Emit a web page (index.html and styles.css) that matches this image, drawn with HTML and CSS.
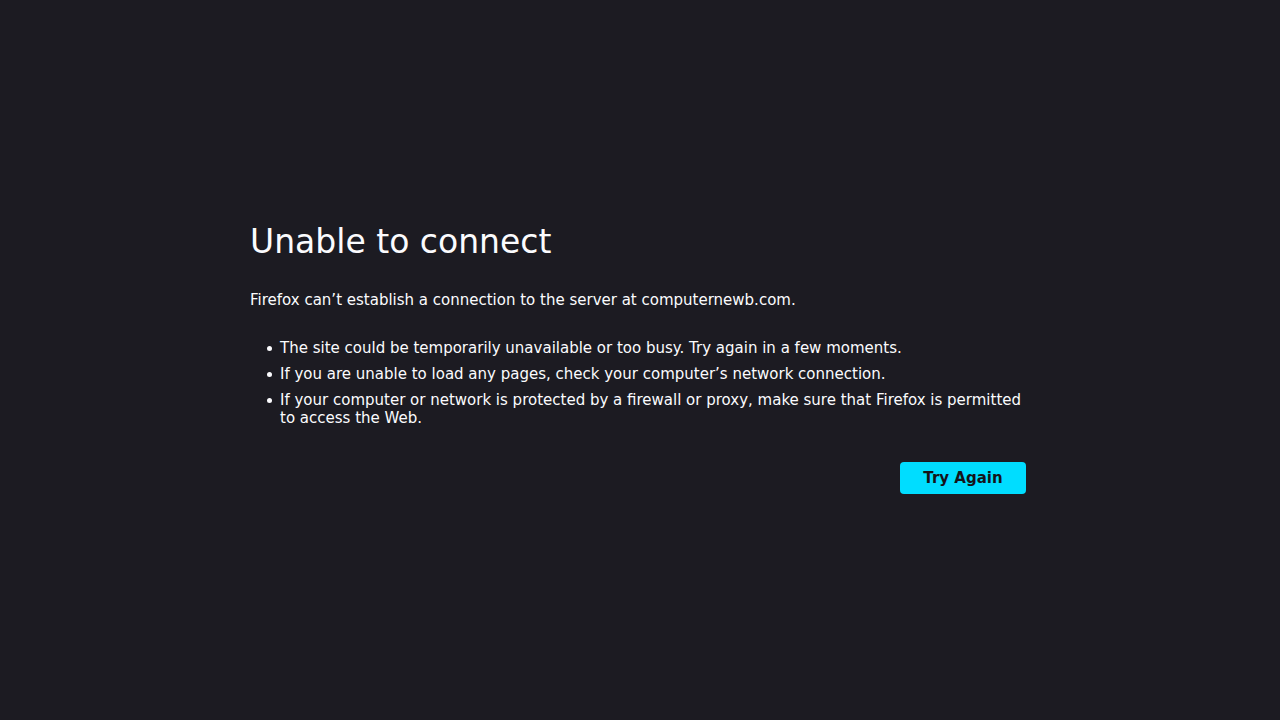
FILE: index.html
```html
<!DOCTYPE html>
<html>
<head>
  <meta charset="UTF-8">
  <title>Problem loading page</title>
  <link rel="stylesheet" href="styles.css">
</head>
<body>
  <div class="container">
    <h1 class="title">Unable to connect</h1>

    <p class="short-desc">Firefox can’t establish a connection to the server at computernewb.com.</p>

    <ul class="long-desc">
      <li>The site could be temporarily unavailable or too busy. Try again in a few moments.</li>
      <li>If you are unable to load any pages, check your computer’s network connection.</li>
      <li>If your computer or network is protected by a firewall or proxy, make sure that Firefox is permitted to access the Web.</li>
    </ul>

    <div class="button-row">
      <button class="primary">Try Again</button>
    </div>
  </div>
</body>
</html>
```

FILE: styles.css
```css
html, body {
  margin: 0;
  padding: 0;
  height: 100%;
}

body {
  background: #1c1b22;
  color: #fbfbfe;
  font-family: "DejaVu Sans", sans-serif;
  font-size: 15px;
  display: flex;
  align-items: center;
  justify-content: center;
}

.container {
  width: 776px;
  margin-left: -4px;
  padding-bottom: 4px;
}

.title {
  font-size: 33px;
  font-weight: normal;
  line-height: 1.2;
  margin: 0 0 29px;
}

.short-desc {
  margin: 0 0 30px;
  line-height: 18px;
}

.long-desc {
  margin: 0;
  padding-left: 17px;
  line-height: 18px;
  list-style: none;
}

.long-desc li {
  display: flex;
  margin-bottom: 8px;
}

.long-desc li::before {
  content: "";
  flex: none;
  width: 5px;
  height: 5px;
  border-radius: 50%;
  background: #fbfbfe;
  margin: 7px 8px 0 0;
}

.long-desc li:last-child {
  margin-bottom: 0;
}

.button-row {
  display: flex;
  justify-content: flex-end;
  margin-top: 35px;
}

.primary {
  background: #00ddff;
  color: #15141a;
  border: none;
  border-radius: 4px;
  font-family: "DejaVu Sans", sans-serif;
  font-size: 15px;
  font-weight: bold;
  height: 32px;
  width: 126px;
  padding: 0;
}
```
